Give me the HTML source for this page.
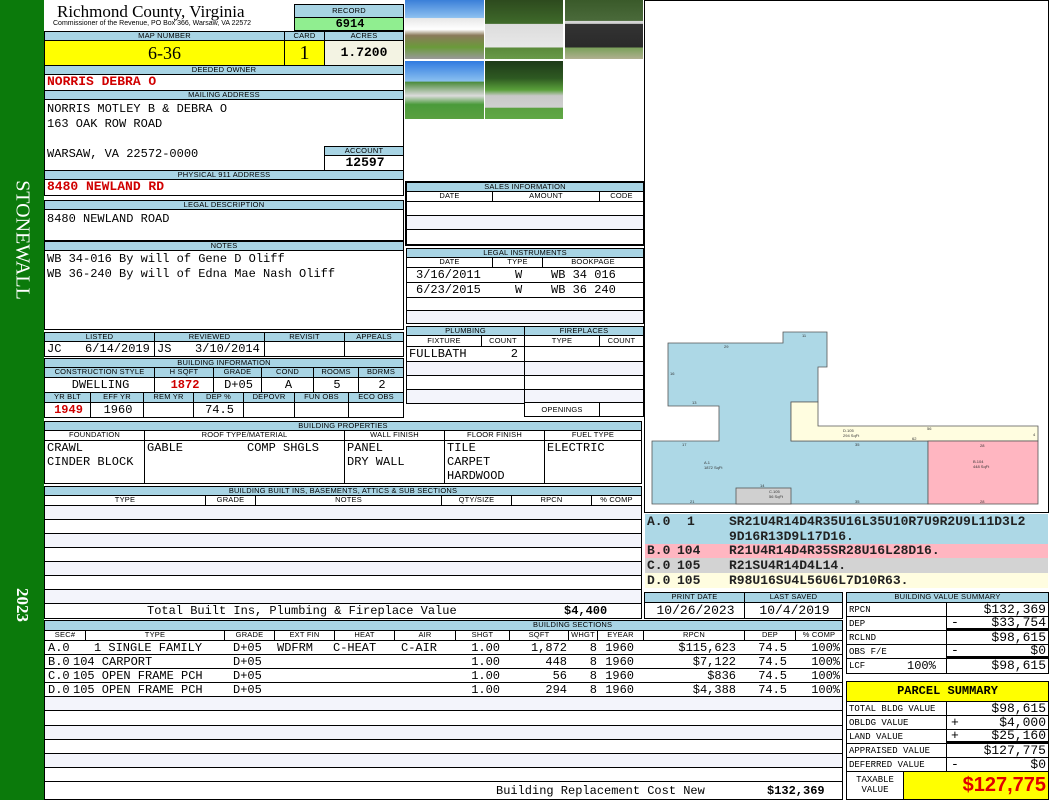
<!DOCTYPE html>
<html><head><meta charset="utf-8"><style>
*{margin:0;padding:0}
body{width:1050px;height:800px;position:relative;background:#fff;overflow:hidden;font-family:"Liberation Mono",monospace}
.c{position:absolute;box-sizing:border-box;border:1px solid #000;overflow:hidden;white-space:nowrap;background:#fff}
.h{background:#a8d4e4;font:7.5px/8px "Liberation Sans",sans-serif;text-align:center;color:#000;letter-spacing:0.2px}
.m{font-size:12px;line-height:14px;padding-left:2px}
.r{text-align:right;padding-right:2px}
.ct{text-align:center}
.red{color:#d00000;font-weight:bold}
.bd{font-weight:bold}
.alt{background:#f3f4fb}
.t{position:absolute;white-space:nowrap}
.sk{font:4px "Liberation Sans",sans-serif;position:absolute;color:#333}
.cd{position:absolute;left:645px;width:403px;font:bold 13px/15px "Liberation Mono",monospace;color:#222;white-space:nowrap}
.cd span{position:absolute}
</style></head><body>

<div style="position:absolute;left:0;top:0;width:44px;height:800px;background:#0b7a0b"></div>
<div class="t" style="left:22px;top:240px;transform:translate(-50%,-50%) rotate(90deg);font:20px 'Liberation Serif',serif;color:#fff">STONEWALL</div>
<div class="t" style="left:22px;top:605px;transform:translate(-50%,-50%) rotate(90deg);font:bold 17px 'Liberation Serif',serif;color:#fff">2023</div>

<div class="t" style="left:57px;top:2px;font:17px 'Liberation Serif',serif">Richmond County, Virginia</div>
<div class="t" style="left:53px;top:20px;font:7px 'Liberation Sans',sans-serif">Commissioner of the Revenue, PO Box 366, Warsaw, VA 22572</div>

<div class="c h" style="left:294px;top:4px;width:110px;height:14px;line-height:12px">RECORD</div>
<div class="c m ct bd" style="left:294px;top:17px;width:110px;height:14px;line-height:12px;background:#90ee90">6914</div>

<div class="c h" style="left:44px;top:31px;width:241px;height:10px">MAP NUMBER</div>
<div class="c h" style="left:284px;top:31px;width:41px;height:10px">CARD</div>
<div class="c h" style="left:324px;top:31px;width:80px;height:10px">ACRES</div>
<div class="c ct" style="left:44px;top:40px;width:241px;height:26px;background:#ffff00;font:18px/24px 'Liberation Serif',serif">6-36</div>
<div class="c ct" style="left:284px;top:40px;width:41px;height:26px;background:#ffff00;font:20px/24px 'Liberation Serif',serif">1</div>
<div class="c ct bd" style="left:324px;top:40px;width:80px;height:26px;background:#f3f3e3;font-size:13px;line-height:24px">1.7200</div>

<div class="c h" style="left:44px;top:65px;width:360px;height:10px">DEEDED OWNER</div>
<div class="c m red" style="left:44px;top:74px;width:360px;height:17px;font-size:13px">NORRIS DEBRA O</div>
<div class="c h" style="left:44px;top:90px;width:360px;height:10px">MAILING ADDRESS</div>
<div class="c m" style="left:44px;top:99px;width:360px;height:72px;line-height:15px;padding-top:2px">NORRIS MOTLEY B &amp; DEBRA O<br>163 OAK ROW ROAD<br><br>WARSAW, VA 22572-0000</div>
<div class="c h" style="left:324px;top:146px;width:80px;height:10px">ACCOUNT</div>
<div class="c m ct bd" style="left:324px;top:155px;width:80px;height:16px;font-size:13px">12597</div>
<div class="c h" style="left:44px;top:170px;width:360px;height:10px">PHYSICAL 911 ADDRESS</div>
<div class="c m red" style="left:44px;top:179px;width:360px;height:17px;font-size:13px">8480 NEWLAND RD</div>

<div class="c h" style="left:44px;top:200px;width:360px;height:10px">LEGAL DESCRIPTION</div>
<div class="c m" style="left:44px;top:209px;width:360px;height:32px;padding-top:2px">8480 NEWLAND ROAD</div>
<div class="c h" style="left:44px;top:241px;width:360px;height:10px">NOTES</div>
<div class="c m" style="left:44px;top:250px;width:360px;height:80px;line-height:15px;padding-top:1px">WB 34-016 By will of Gene D Oliff<br>WB 36-240 By will of Edna Mae Nash Oliff</div>

<div class="c h" style="left:44px;top:332px;width:111px;height:10px">LISTED</div>
<div class="c h" style="left:154px;top:332px;width:111px;height:10px">REVIEWED</div>
<div class="c h" style="left:264px;top:332px;width:81px;height:10px">REVISIT</div>
<div class="c h" style="left:344px;top:332px;width:60px;height:10px">APPEALS</div>
<div class="c m" style="left:44px;top:341px;width:111px;height:16px">JC<span class="t" style="left:40px">6/14/2019</span></div>
<div class="c m" style="left:154px;top:341px;width:111px;height:16px">JS<span class="t" style="left:40px">3/10/2014</span></div>
<div class="c" style="left:264px;top:341px;width:81px;height:16px"></div>
<div class="c" style="left:344px;top:341px;width:60px;height:16px"></div>

<div class="c h" style="left:44px;top:358px;width:360px;height:10px">BUILDING INFORMATION</div>
<div class="c h" style="left:44px;top:367px;width:111px;height:11px">CONSTRUCTION STYLE</div>
<div class="c h" style="left:154px;top:367px;width:60px;height:11px">H SQFT</div>
<div class="c h" style="left:213px;top:367px;width:49px;height:11px">GRADE</div>
<div class="c h" style="left:261px;top:367px;width:53px;height:11px">COND</div>
<div class="c h" style="left:313px;top:367px;width:46px;height:11px">ROOMS</div>
<div class="c h" style="left:358px;top:367px;width:46px;height:11px">BDRMS</div>
<div class="c m ct" style="left:44px;top:377px;width:111px;height:16px">DWELLING</div>
<div class="c m ct red" style="left:154px;top:377px;width:60px;height:16px">1872</div>
<div class="c m ct" style="left:213px;top:377px;width:49px;height:16px">D+05</div>
<div class="c m ct" style="left:261px;top:377px;width:53px;height:16px">A</div>
<div class="c m ct" style="left:313px;top:377px;width:46px;height:16px">5</div>
<div class="c m ct" style="left:358px;top:377px;width:46px;height:16px">2</div>
<div class="c h" style="left:44px;top:392px;width:47px;height:11px">YR BLT</div>
<div class="c h" style="left:90px;top:392px;width:54px;height:11px">EFF YR</div>
<div class="c h" style="left:143px;top:392px;width:51px;height:11px">REM YR</div>
<div class="c h" style="left:193px;top:392px;width:51px;height:11px">DEP %</div>
<div class="c h" style="left:243px;top:392px;width:52px;height:11px">DEPOVR</div>
<div class="c h" style="left:294px;top:392px;width:55px;height:11px">FUN OBS</div>
<div class="c h" style="left:348px;top:392px;width:56px;height:11px">ECO OBS</div>
<div class="c m ct red" style="left:44px;top:402px;width:47px;height:16px">1949</div>
<div class="c m ct" style="left:90px;top:402px;width:54px;height:16px">1960</div>
<div class="c" style="left:143px;top:402px;width:51px;height:16px"></div>
<div class="c m ct" style="left:193px;top:402px;width:51px;height:16px">74.5</div>
<div class="c" style="left:243px;top:402px;width:52px;height:16px"></div>
<div class="c" style="left:294px;top:402px;width:55px;height:16px"></div>
<div class="c" style="left:348px;top:402px;width:56px;height:16px"></div>

<!-- photos -->
<div style="position:absolute;left:405px;top:0;width:79px;height:59px;background:linear-gradient(#3a7fd8 0%,#8cc0f0 30%,#e8e8e8 31%,#fff 50%,#8a7a5a 60%,#6a9a3a 80%,#999 100%)"></div>
<div style="position:absolute;left:485px;top:0;width:78px;height:59px;background:linear-gradient(#2d4a1e 0%,#3f6a2a 40%,#dcdcdc 41%,#e8e8e8 80%,#5a8a3a 81%,#6a9a4a 100%)"></div>
<div style="position:absolute;left:565px;top:0;width:78px;height:59px;background:linear-gradient(#3a5a2a 0%,#4a6a3a 35%,#d8d8d8 36%,#cfcfcf 40%,#333 41%,#2a2a2a 80%,#7aa05a 81%,#b0b090 100%)"></div>
<div style="position:absolute;left:405px;top:61px;width:79px;height:58px;background:linear-gradient(#2f7ae0 0%,#8ac0f0 35%,#4a8a3a 36%,#dcdcdc 60%,#4a9a3a 75%,#5aa040 100%)"></div>
<div style="position:absolute;left:485px;top:61px;width:78px;height:58px;background:linear-gradient(#1e3a18 0%,#2e5a22 30%,#5aa03a 50%,#c8c8c8 60%,#d0d0d0 80%,#5aa040 81%,#60a845 100%)"></div>

<!-- sales -->
<div class="c" style="left:405px;top:181px;width:239px;height:65px"></div>
<div class="c h" style="left:406px;top:182px;width:238px;height:10px">SALES INFORMATION</div>
<div class="c h" style="left:406px;top:191px;width:87px;height:11px;background:#fff">DATE</div>
<div class="c h" style="left:492px;top:191px;width:108px;height:11px;background:#fff">AMOUNT</div>
<div class="c h" style="left:599px;top:191px;width:45px;height:11px;background:#fff">CODE</div>
<div class="c" style="left:406px;top:201px;width:238px;height:15px"></div>
<div class="c alt" style="left:406px;top:215px;width:238px;height:15px"></div>
<div class="c" style="left:406px;top:229px;width:238px;height:16px"></div>

<div class="c h" style="left:406px;top:248px;width:238px;height:10px">LEGAL INSTRUMENTS</div>
<div class="c h" style="left:406px;top:257px;width:87px;height:11px;background:#fff">DATE</div>
<div class="c h" style="left:492px;top:257px;width:51px;height:11px;background:#fff">TYPE</div>
<div class="c h" style="left:542px;top:257px;width:102px;height:11px;background:#fff">BOOKPAGE</div>
<div class="c m" style="left:406px;top:267px;width:238px;height:16px;line-height:15px"><span class="t" style="left:9px">3/16/2011</span><span class="t" style="left:108px">W</span><span class="t" style="left:144px">WB 34 016</span></div>
<div class="c m" style="left:406px;top:282px;width:238px;height:16px;line-height:15px"><span class="t" style="left:9px">6/23/2015</span><span class="t" style="left:108px">W</span><span class="t" style="left:144px">WB 36 240</span></div>
<div class="c" style="left:406px;top:297px;width:238px;height:14px"></div>
<div class="c alt" style="left:406px;top:310px;width:238px;height:14px"></div>

<!-- plumbing / fireplaces -->
<div class="c h" style="left:406px;top:326px;width:119px;height:10px">PLUMBING</div>
<div class="c h" style="left:524px;top:326px;width:120px;height:10px">FIREPLACES</div>
<div class="c h" style="left:406px;top:335px;width:76px;height:12px;background:#fff;line-height:10px">FIXTURE</div>
<div class="c h" style="left:481px;top:335px;width:44px;height:12px;background:#fff;line-height:10px">COUNT</div>
<div class="c h" style="left:524px;top:335px;width:76px;height:12px;background:#fff;line-height:10px">TYPE</div>
<div class="c h" style="left:599px;top:335px;width:45px;height:12px;background:#fff;line-height:10px">COUNT</div>
<div class="c m" style="left:406px;top:346px;width:119px;height:16px">FULLBATH<span class="t" style="right:6px">2</span></div>
<div class="c alt" style="left:406px;top:361px;width:119px;height:15px"></div>
<div class="c" style="left:406px;top:375px;width:119px;height:15px"></div>
<div class="c alt" style="left:406px;top:389px;width:119px;height:15px"></div>
<div class="c" style="left:524px;top:346px;width:120px;height:16px"></div>
<div class="c alt" style="left:524px;top:361px;width:120px;height:15px"></div>
<div class="c" style="left:524px;top:375px;width:120px;height:15px"></div>
<div class="c alt" style="left:524px;top:389px;width:120px;height:14px"></div>
<div class="c h" style="left:524px;top:402px;width:76px;height:15px;background:#fff;line-height:13px">OPENINGS</div>
<div class="c" style="left:599px;top:402px;width:45px;height:15px"></div>

<!-- building properties -->
<div class="c h" style="left:44px;top:421px;width:598px;height:10px">BUILDING PROPERTIES</div>
<div class="c h" style="left:44px;top:430px;width:101px;height:11px;background:#fff">FOUNDATION</div>
<div class="c h" style="left:144px;top:430px;width:201px;height:11px;background:#fff">ROOF TYPE/MATERIAL</div>
<div class="c h" style="left:344px;top:430px;width:101px;height:11px;background:#fff">WALL FINISH</div>
<div class="c h" style="left:444px;top:430px;width:101px;height:11px;background:#fff">FLOOR FINISH</div>
<div class="c h" style="left:544px;top:430px;width:98px;height:11px;background:#fff">FUEL TYPE</div>
<div class="c m" style="left:44px;top:440px;width:101px;height:44px">CRAWL<br>CINDER BLOCK</div>
<div class="c m" style="left:144px;top:440px;width:201px;height:44px">GABLE<span class="t" style="left:102px;top:0">COMP SHGLS</span></div>
<div class="c m" style="left:344px;top:440px;width:101px;height:44px">PANEL<br>DRY WALL</div>
<div class="c m" style="left:444px;top:440px;width:101px;height:44px">TILE<br>CARPET<br>HARDWOOD</div>
<div class="c m" style="left:544px;top:440px;width:98px;height:44px">ELECTRIC</div>

<!-- built ins -->
<div class="c h" style="left:44px;top:486px;width:598px;height:10px">BUILDING BUILT INS, BASEMENTS, ATTICS &amp; SUB SECTIONS</div>
<div class="c h" style="left:44px;top:495px;width:162px;height:11px;background:#fff">TYPE</div>
<div class="c h" style="left:205px;top:495px;width:51px;height:11px;background:#fff">GRADE</div>
<div class="c h" style="left:255px;top:495px;width:187px;height:11px;background:#fff">NOTES</div>
<div class="c h" style="left:441px;top:495px;width:71px;height:11px;background:#fff">QTY/SIZE</div>
<div class="c h" style="left:511px;top:495px;width:81px;height:11px;background:#fff">RPCN</div>
<div class="c h" style="left:591px;top:495px;width:51px;height:11px;background:#fff">% COMP</div>
<div class="c alt" style="left:44px;top:505px;width:598px;height:15px"></div>
<div class="c" style="left:44px;top:519px;width:598px;height:15px"></div>
<div class="c alt" style="left:44px;top:533px;width:598px;height:15px"></div>
<div class="c" style="left:44px;top:547px;width:598px;height:15px"></div>
<div class="c alt" style="left:44px;top:561px;width:598px;height:15px"></div>
<div class="c" style="left:44px;top:575px;width:598px;height:15px"></div>
<div class="c alt" style="left:44px;top:589px;width:598px;height:15px"></div>
<div class="c m" style="left:44px;top:603px;width:598px;height:16px"><span class="t" style="left:102px">Total Built Ins, Plumbing &amp; Fireplace Value</span><span class="t bd" style="left:519px">$4,400</span></div>

<!-- building sections -->
<div class="c h" style="left:44px;top:620px;width:799px;height:11px;text-align:left;padding-left:488px">BUILDING SECTIONS</div>
<div class="c h" style="left:44px;top:630px;width:42px;height:11px;background:#fff">SEC#</div>
<div class="c h" style="left:85px;top:630px;width:140px;height:11px;background:#fff">TYPE</div>
<div class="c h" style="left:224px;top:630px;width:51px;height:11px;background:#fff">GRADE</div>
<div class="c h" style="left:274px;top:630px;width:61px;height:11px;background:#fff">EXT FIN</div>
<div class="c h" style="left:334px;top:630px;width:61px;height:11px;background:#fff">HEAT</div>
<div class="c h" style="left:394px;top:630px;width:62px;height:11px;background:#fff">AIR</div>
<div class="c h" style="left:455px;top:630px;width:55px;height:11px;background:#fff">SHGT</div>
<div class="c h" style="left:509px;top:630px;width:60px;height:11px;background:#fff">SQFT</div>
<div class="c h" style="left:568px;top:630px;width:30px;height:11px;background:#fff">WHGT</div>
<div class="c h" style="left:597px;top:630px;width:47px;height:11px;background:#fff">EYEAR</div>
<div class="c h" style="left:643px;top:630px;width:102px;height:11px;background:#fff">RPCN</div>
<div class="c h" style="left:744px;top:630px;width:52px;height:11px;background:#fff">DEP</div>
<div class="c h" style="left:795px;top:630px;width:48px;height:11px;background:#fff">% COMP</div>

<div class="c m" style="left:44px;top:640px;width:799px;height:15px"><span class="t" style="left:3px">A.0</span><span class="t" style="left:49px">1 SINGLE FAMILY</span><span class="t" style="left:188px">D+05</span><span class="t" style="left:232px">WDFRM</span><span class="t" style="left:288px">C-HEAT</span><span class="t" style="left:356px">C-AIR</span><span class="t" style="right:342px">1.00</span><span class="t" style="right:275px">1,872</span><span class="t" style="right:245px">8</span><span class="t" style="right:208px">1960</span><span class="t" style="right:106px">$115,623</span><span class="t" style="right:55px">74.5</span><span class="t" style="right:2px">100%</span></div>
<div class="c m" style="left:44px;top:654px;width:799px;height:15px"><span class="t" style="left:3px">B.0</span><span class="t" style="left:28px">104 CARPORT</span><span class="t" style="left:188px">D+05</span><span class="t" style="right:342px">1.00</span><span class="t" style="right:275px">448</span><span class="t" style="right:245px">8</span><span class="t" style="right:208px">1960</span><span class="t" style="right:106px">$7,122</span><span class="t" style="right:55px">74.5</span><span class="t" style="right:2px">100%</span></div>
<div class="c m" style="left:44px;top:668px;width:799px;height:15px"><span class="t" style="left:3px">C.0</span><span class="t" style="left:28px">105 OPEN FRAME PCH</span><span class="t" style="left:188px">D+05</span><span class="t" style="right:342px">1.00</span><span class="t" style="right:275px">56</span><span class="t" style="right:245px">8</span><span class="t" style="right:208px">1960</span><span class="t" style="right:106px">$836</span><span class="t" style="right:55px">74.5</span><span class="t" style="right:2px">100%</span></div>
<div class="c m" style="left:44px;top:682px;width:799px;height:15px"><span class="t" style="left:3px">D.0</span><span class="t" style="left:28px">105 OPEN FRAME PCH</span><span class="t" style="left:188px">D+05</span><span class="t" style="right:342px">1.00</span><span class="t" style="right:275px">294</span><span class="t" style="right:245px">8</span><span class="t" style="right:208px">1960</span><span class="t" style="right:106px">$4,388</span><span class="t" style="right:55px">74.5</span><span class="t" style="right:2px">100%</span></div>
<div class="c alt" style="left:44px;top:696px;width:799px;height:15px"></div>
<div class="c" style="left:44px;top:710px;width:799px;height:16px"></div>
<div class="c alt" style="left:44px;top:725px;width:799px;height:15px"></div>
<div class="c" style="left:44px;top:739px;width:799px;height:15px"></div>
<div class="c alt" style="left:44px;top:753px;width:799px;height:15px"></div>
<div class="c" style="left:44px;top:767px;width:799px;height:15px"></div>
<div class="c m" style="left:44px;top:781px;width:799px;height:19px;line-height:19px"><span class="t" style="left:451px">Building Replacement Cost New</span><span class="t bd" style="left:722px">$132,369</span></div>

<!-- sketch -->
<div class="c" style="left:644px;top:0;width:405px;height:513px"></div>
<svg style="position:absolute;left:0;top:0" width="1050" height="513">
<polygon points="668,343 783,343 783,332 827,332 827,367 818,367 818,402 791,402 791,441 928,441 928,504 652,504 652,441 719,441 719,406 668,406" fill="#add8e6" stroke="#555" stroke-width="0.8"/>
<polygon points="791,402 818,402 818,426 1038,426 1038,441 791,441" fill="#fffde0" stroke="#555" stroke-width="0.8"/>
<rect x="928" y="441" width="110" height="63" fill="#ffb6c1" stroke="#555" stroke-width="0.8"/>
<rect x="736" y="488" width="55" height="16" fill="#d0d0d0" stroke="#555" stroke-width="0.8"/>
</svg>
<div class="sk" style="left:724px;top:344px">29</div><div class="sk" style="left:802px;top:333px">11</div><div class="sk" style="left:670px;top:371px">16</div>
<div class="sk" style="left:692px;top:400px">13</div><div class="sk" style="left:682px;top:442px">17</div><div class="sk" style="left:704px;top:460px">A.1<br>1872 SqFt</div>
<div class="sk" style="left:855px;top:442px">35</div><div class="sk" style="left:855px;top:499px">35</div><div class="sk" style="left:843px;top:428px">D.105<br>294 SqFt</div>
<div class="sk" style="left:973px;top:459px">B.104<br>448 SqFt</div><div class="sk" style="left:980px;top:443px">28</div><div class="sk" style="left:980px;top:499px">28</div>
<div class="sk" style="left:769px;top:489px">C.105<br>56 SqFt</div><div class="sk" style="left:690px;top:499px">21</div><div class="sk" style="left:760px;top:483px">14</div>
<div class="sk" style="left:927px;top:426px">56</div><div class="sk" style="left:912px;top:436px">62</div><div class="sk" style="left:1033px;top:432px">4</div>

<div class="cd" style="top:514px;height:30px;background:#add8e6"><span style="left:2px">A.0</span><span style="left:42px">1</span><span style="left:84px">SR21U4R14D4R35U16L35U10R7U9R2U9L11D3L2</span><span style="left:84px;top:15px">9D16R13D9L17D16.</span></div>
<div class="cd" style="top:544px;height:14px;line-height:14px;background:#ffb6c1"><span style="left:2px">B.0</span><span style="left:32px">104</span><span style="left:84px">R21U4R14D4R35SR28U16L28D16.</span></div>
<div class="cd" style="top:558px;height:15px;background:#d3d3d3"><span style="left:2px">C.0</span><span style="left:32px">105</span><span style="left:84px">R21SU4R14D4L14.</span></div>
<div class="cd" style="top:573px;height:15px;background:#fffde0"><span style="left:2px">D.0</span><span style="left:32px">105</span><span style="left:84px">R98U16SU4L56U6L7D10R63.</span></div>

<!-- print date -->
<div class="c h" style="left:644px;top:592px;width:101px;height:11px">PRINT DATE</div>
<div class="c h" style="left:744px;top:592px;width:99px;height:11px">LAST SAVED</div>
<div class="c m ct" style="left:644px;top:602px;width:101px;height:17px;font-size:13px;line-height:15px">10/26/2023</div>
<div class="c m ct" style="left:744px;top:602px;width:99px;height:17px;font-size:13px;line-height:15px">10/4/2019</div>

<!-- value summary -->
<div class="c h" style="left:846px;top:592px;width:203px;height:11px">BUILDING VALUE SUMMARY</div>
<div class="c m" style="left:846px;top:602px;width:101px;height:15px;font-size:9px">RPCN</div>
<div class="c m r" style="left:946px;top:602px;width:103px;height:15px;font-size:13px">$132,369</div>
<div class="c m" style="left:846px;top:616px;width:101px;height:15px;font-size:9px">DEP</div>
<div class="c m r" style="left:946px;top:616px;width:103px;height:15px;font-size:13px;border-bottom-width:3px;line-height:12px"><span class="t" style="left:4px">-</span>$33,754</div>
<div class="c m" style="left:846px;top:630px;width:101px;height:15px;font-size:9px">RCLND</div>
<div class="c m r" style="left:946px;top:630px;width:103px;height:15px;font-size:13px">$98,615</div>
<div class="c m" style="left:846px;top:644px;width:101px;height:15px;font-size:9px">OBS F/E</div>
<div class="c m r" style="left:946px;top:644px;width:103px;height:15px;font-size:13px;border-bottom-width:3px;line-height:12px"><span class="t" style="left:4px">-</span>$0</div>
<div class="c m" style="left:846px;top:658px;width:101px;height:16px;font-size:9px">LCF<span class="t" style="left:60px;font-size:12px">100%</span></div>
<div class="c m r" style="left:946px;top:658px;width:103px;height:16px;font-size:13px">$98,615</div>

<!-- parcel summary -->
<div class="c ct" style="left:846px;top:681px;width:203px;height:21px;background:#ffff00;font:bold 12px/19px 'Liberation Mono',monospace">PARCEL SUMMARY</div>
<div class="c m" style="left:846px;top:701px;width:101px;height:15px;font-size:9px">TOTAL BLDG VALUE</div>
<div class="c m r" style="left:946px;top:701px;width:103px;height:15px;font-size:13px">$98,615</div>
<div class="c m" style="left:846px;top:715px;width:101px;height:15px;font-size:9px">OBLDG VALUE</div>
<div class="c m r" style="left:946px;top:715px;width:103px;height:15px;font-size:13px"><span class="t" style="left:4px">+</span>$4,000</div>
<div class="c m" style="left:846px;top:729px;width:101px;height:15px;font-size:9px">LAND VALUE</div>
<div class="c m r" style="left:946px;top:729px;width:103px;height:15px;font-size:13px;border-bottom-width:3px;line-height:12px"><span class="t" style="left:4px">+</span>$25,160</div>
<div class="c m" style="left:846px;top:743px;width:101px;height:15px;font-size:9px">APPRAISED VALUE</div>
<div class="c m r" style="left:946px;top:743px;width:103px;height:15px;font-size:13px">$127,775</div>
<div class="c m" style="left:846px;top:757px;width:101px;height:15px;font-size:9px">DEFERRED VALUE</div>
<div class="c m r" style="left:946px;top:757px;width:103px;height:15px;font-size:13px"><span class="t" style="left:4px">-</span>$0</div>
<div class="c ct" style="left:846px;top:771px;width:58px;height:29px;font:9px/10px 'Liberation Mono',monospace;padding-top:3px">TAXABLE<br>VALUE</div>
<div class="c r" style="left:903px;top:771px;width:146px;height:29px;background:#ffff00;color:#e00000;font:bold 20px/27px 'Liberation Sans',sans-serif">$127,775</div>

</body></html>
